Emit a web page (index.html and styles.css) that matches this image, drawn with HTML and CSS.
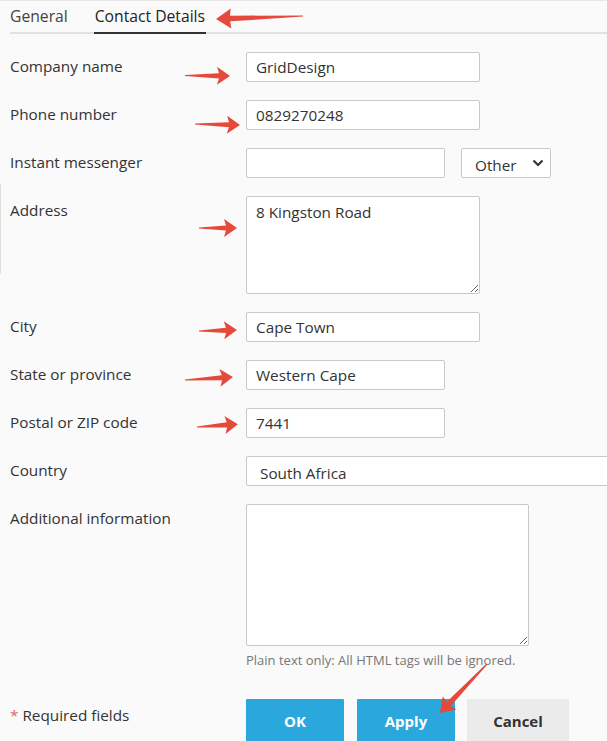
FILE: index.html
```html
<!DOCTYPE html>
<html>
<head>
<meta charset="utf-8">
<link rel="stylesheet" href="styles.css">
</head>
<body>
<div class="page">
  <div class="tabs">
    <span class="tab">General</span>
    <span class="tab active">Contact Details</span>
  </div>
  <div class="edge"></div>
  <form class="form">
    <label class="lbl">Company name</label>
    <div class="ctl"><input class="inp w234" type="text" value="GridDesign"></div>

    <label class="lbl">Phone number</label>
    <div class="ctl"><input class="inp w234" type="text" value="0829270248"></div>

    <label class="lbl">Instant messenger</label>
    <div class="ctl im">
      <input class="inp w199" type="text" value="">
      <div class="selwrap">
        <select class="sel w90"><option>Other</option></select>
        <svg class="chev" width="12" height="8" viewBox="0 0 12 8"><path d="M1.5 1.5 L6 6 L10.5 1.5" fill="none" stroke="#333" stroke-width="2.2"/></svg>
      </div>
    </div>

    <label class="lbl">Address</label>
    <div class="ctl"><textarea class="ta addr">8 Kingston Road</textarea></div>

    <label class="lbl">City</label>
    <div class="ctl"><input class="inp w234" type="text" value="Cape Town"></div>

    <label class="lbl">State or province</label>
    <div class="ctl"><input class="inp w199" type="text" value="Western Cape"></div>

    <label class="lbl">Postal or ZIP code</label>
    <div class="ctl"><input class="inp w199" type="text" value="7441"></div>

    <label class="lbl">Country</label>
    <div class="ctl"><select class="sel country"><option>South Africa</option></select></div>

    <label class="lbl">Additional information</label>
    <div class="ctl">
      <textarea class="ta info"></textarea>
      <div class="help">Plain text only: All HTML tags will be ignored.</div>
    </div>

    <div class="lbl req"><span class="star">*</span> Required fields</div>
    <div class="ctl buttons">
      <button type="button" class="btn primary ok">OK</button>
      <button type="button" class="btn primary apply">Apply</button>
      <button type="button" class="btn cancel">Cancel</button>
    </div>
  </form>

  <svg class="arrows" width="607" height="741" viewBox="0 0 607 741">
    <defs>
      <path id="a87" d="M0,-0.6 L73,-2.8 L72,-10 L87,0 L72,10 L73,2.8 L0,0.6 Z"/>
      <path id="a45" d="M0,-0.6 L34,-2.6 L32,-9 L45,0 L32,9 L34,2.6 L0,0.6 Z"/>
      <path id="a38" d="M0,-0.6 L27,-2.6 L25,-9 L38,0 L25,9 L27,2.6 L0,0.6 Z"/>
      <path id="a48" d="M0,-0.6 L37,-2.6 L35,-9 L48,0 L35,9 L37,2.6 L0,0.6 Z"/>
      <path id="a41" d="M0,-0.6 L30,-2.6 L28,-9 L41,0 L28,9 L30,2.6 L0,0.6 Z"/>
      <path id="a68" d="M0,-0.6 L55,-2.8 L54,-9.5 L68,0 L54,9.5 L55,2.8 L0,0.6 Z"/>
    </defs>
    <g fill="#e5493a">
      <use href="#a87" transform="translate(303 15) rotate(178)"/>
      <use href="#a45" transform="translate(185 74.5) rotate(0.5)"/>
      <use href="#a45" transform="translate(195 123) rotate(1.3)"/>
      <use href="#a38" transform="translate(199 227) rotate(0)"/>
      <use href="#a38" transform="translate(199 330) rotate(-1.5)"/>
      <use href="#a48" transform="translate(185 379) rotate(-3.5)"/>
      <use href="#a41" transform="translate(197 426) rotate(-4)"/>
      <use href="#a68" transform="translate(487 663) rotate(133.8)"/>
    </g>
  </svg>
</div>
</body>
</html>
```

FILE: styles.css
```css
html, body {
  margin: 0;
  padding: 0;
  background: #fafafa;
  overflow: hidden;
}
body {
  width: 607px;
  height: 741px;
  font-family: "Open Sans", "Liberation Sans", sans-serif;
  color: #333;
  font-size: 15.3px;
}
.page {
  position: relative;
  width: 607px;
  height: 741px;
  border-top: 1px solid #e6e6e6;
  box-sizing: border-box;
}
.tabs {
  display: flex;
  gap: 27px;
  margin-left: 10px;
  border-bottom: 2px solid #e2e2e2;
  box-sizing: border-box;
  height: 33px;
}
.tab {
  font-size: 15.7px;
  line-height: 30px;
  color: #444;
  border-bottom: 2px solid transparent;
  margin-bottom: -2px;
  padding: 0;
}
.tab.active {
  color: #222;
  border-bottom-color: #333;
  padding: 0 1px;
  margin-left: -1px;
}
.edge {
  position: absolute;
  left: 0;
  top: 183px;
  width: 1px;
  height: 90px;
  background: #e0e0e0;
}
.form {
  display: grid;
  grid-template-columns: 236px 1fr;
  row-gap: 18px;
  padding: 18px 0 0 10px;
  margin: 0;
}
.lbl {
  font-size: 15.3px;
  line-height: 28px;
  color: #333;
}
.ctl {
  display: flex;
  flex-direction: column;
  align-items: flex-start;
}
.ctl.im {
  flex-direction: row;
  gap: 16px;
}
.inp, .sel, .ta {
  font-family: "Open Sans", "Liberation Sans", sans-serif;
  font-size: 15.3px;
  color: #333;
  background: #fff;
  border: 1px solid #c9c9c9;
  border-radius: 2px;
  box-sizing: border-box;
  margin: 0;
  outline: none;
}
.inp {
  height: 30px;
  padding: 0 9px;
}
.w234 { width: 234px; }
.w199 { width: 199px; }
.selwrap {
  position: relative;
}
.sel {
  -webkit-appearance: none;
  appearance: none;
  height: 30px;
  padding: 3px 0 0 13px;
}
.w90 { width: 90px; }
.chev {
  position: absolute;
  right: 7px;
  top: 11px;
  pointer-events: none;
}
.country {
  width: 380px;
}
.ta {
  padding: 5px 9px;
  resize: both;
  line-height: 20px;
}
.addr {
  width: 234px;
  height: 98px;
}
.info {
  width: 283px;
  height: 142px;
}
.help {
  font-size: 13px;
  color: #777;
  margin-top: 5px;
  line-height: 18px;
}
.req {
  margin-top: 14px;
  line-height: 28px;
}
.star {
  color: #e06470;
}
.buttons {
  flex-direction: row;
  margin-top: 12px;
}
.btn {
  font-family: "Open Sans", "Liberation Sans", sans-serif;
  font-size: 15px;
  font-weight: 700;
  height: 44px;
  border: none;
  border-radius: 1px;
  padding: 0;
  margin: 0;
}
.primary {
  background: #2aa8dd;
  color: #fff;
}
.ok { width: 98px; margin-right: 13px; }
.apply { width: 98px; margin-right: 12px; }
.cancel {
  width: 102px;
  background: #ebebeb;
  color: #333;
}
.arrows {
  position: absolute;
  left: 0;
  top: 0;
  pointer-events: none;
}
```
